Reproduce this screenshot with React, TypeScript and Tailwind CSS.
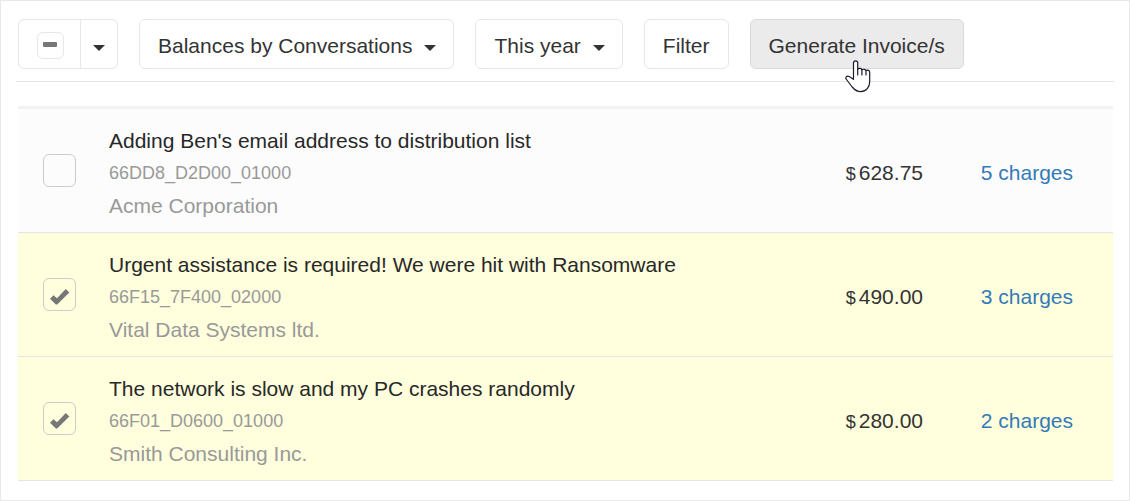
import { useEffect, useRef, useState } from "react";

type Conversation = {
  code: string;
  subject: string;
  company: string;
  amount: string;
  charges: number;
};

const conversations: Conversation[] = [
  {
    code: "66DD8_D2D00_01000",
    subject: "Adding Ben's email address to distribution list",
    company: "Acme Corporation",
    amount: "628.75",
    charges: 5,
  },
  {
    code: "66F15_7F400_02000",
    subject: "Urgent assistance is required! We were hit with Ransomware",
    company: "Vital Data Systems ltd.",
    amount: "490.00",
    charges: 3,
  },
  {
    code: "66F01_D0600_01000",
    subject: "The network is slow and my PC crashes randomly",
    company: "Smith Consulting Inc.",
    amount: "280.00",
    charges: 2,
  },
];

const Caret = ({ className = "" }: { className?: string }) => (
  <svg
    viewBox="0 0 12 6"
    className={`w-3 h-[6px] fill-[#333] pointer-events-none ${className}`}
    aria-hidden="true"
  >
    <path d="M0 0h12L6 6z" />
  </svg>
);

const HandCursor = () => (
  <svg
    viewBox="0 0 26 33"
    className="absolute left-[94px] top-[40px] w-[26px] h-[33px] pointer-events-none"
    fill="#fff"
    stroke="#1b1b2b"
    strokeWidth="1.2"
    strokeLinecap="round"
    strokeLinejoin="round"
    aria-hidden="true"
  >
    <path d="M8.5 19.3V2.9a2.1 2.1 0 0 1 4.2 0v6.2c1.500-1.300 3.800-.8 4.200.7 1.500-1 3.500-.5 4.100.7 1.700-.8 3.700-.2 3.700 1.900v9.300c0 5.300-3.500 10-9 10-4.200 0-6.200-2-8.500-4.700L1.500 19.500C-.2 17.300 1.800 15.600 4 16.500c1.800.7 3 1.800 4.500 2.800z" />
    <path d="M12.700 9v6M16.900 9.800v5.200M21 10.500V15" fill="none" />
  </svg>
);

type SelectProps = { label: string; options: string[] };

const ToolbarSelect = ({ label, options }: SelectProps) => (
  <div className="relative flex items-center">
    <select
      aria-label={label}
      className="field-sizing-content appearance-none h-[50px] pt-1 pl-[18px] pr-[41px] border border-[#e7e7e7] rounded-md bg-white text-[#333]"
    >
      {options.map((option) => (
        <option key={option}>{option}</option>
      ))}
    </select>
    <Caret className="absolute right-[18px] top-[26px]" />
  </div>
);

const App = () => {
  const [selected, setSelected] = useState<string[]>([
    "66F15_7F400_02000",
    "66F01_D0600_01000",
  ]);
  const allRef = useRef<HTMLInputElement>(null);

  const allSelected = selected.length === conversations.length;
  const someSelected = selected.length > 0 && !allSelected;

  useEffect(() => {
    if (allRef.current) allRef.current.indeterminate = someSelected;
  }, [someSelected]);

  const toggle = (code: string) =>
    setSelected((prev) =>
      prev.includes(code) ? prev.filter((c) => c !== code) : [...prev, code]
    );

  const toggleAll = () =>
    setSelected(allSelected ? [] : conversations.map((c) => c.code));

  return (
    <div className="border border-[#e8e8e8] bg-white px-[15px] pt-[18px] pb-[19px] font-['Liberation_Sans',Arial,sans-serif] text-[21px] text-[#333]">
      <div className="flex flex-wrap items-center gap-[21px] px-[2px] pb-3 border-b border-[#e5e5e5]">
        <div className="flex h-[50px] border border-[#e7e7e7] rounded-md bg-white">
          <label className="relative flex items-center pl-[18px] pr-4 pt-[2px] border-r border-[#e7e7e7]">
            <input
              ref={allRef}
              type="checkbox"
              aria-label="Select all"
              checked={allSelected}
              onChange={toggleAll}
              className="peer appearance-none size-[27px] border border-[#e7e7e7] rounded-md"
            />
            <span className="absolute left-6 top-[22px] hidden peer-indeterminate:block w-[14px] h-[5px] rounded-[1px] bg-[#777]" />
          </label>
          <button
            type="button"
            aria-label="Selection options"
            className="px-3 pt-2"
          >
            <Caret />
          </button>
        </div>
        <ToolbarSelect
          label="View"
          options={["Balances by Conversations", "Balances by Customers"]}
        />
        <ToolbarSelect label="Period" options={["This year", "Last year"]} />
        <button
          type="button"
          className="h-[50px] px-[18px] pt-1 border border-[#e7e7e7] rounded-md bg-white"
        >
          Filter
        </button>
        <button
          type="button"
          className="relative h-[50px] px-[18px] pt-1 border border-[#d9d9d9] rounded-md bg-[#ebebeb]"
        >
          Generate Invoice/s
          <HandCursor />
        </button>
      </div>

      <div className="pl-[2px] pr-px mt-6">
        <table className="w-full border-separate border-spacing-0 border-t-3 border-[#f3f3f3]">
          <tbody>
            {conversations.map((item) => {
              const checked = selected.includes(item.code);
              return (
                <tr
                  key={item.code}
                  className={checked ? "bg-[#ffffdd]" : "bg-[#fcfcfc]"}
                >
                  <td className="w-[91px] pl-[25px] border-b border-[#e5e5e5]">
                    <label className="relative block size-[33px]">
                      <input
                        type="checkbox"
                        aria-label={item.subject}
                        checked={checked}
                        onChange={() => toggle(item.code)}
                        className="peer block appearance-none size-[33px] border border-[#ccc] rounded-md"
                      />
                      <svg
                        viewBox="0 0 33 33"
                        className="absolute inset-0 hidden peer-checked:block fill-[#777] pointer-events-none"
                        aria-hidden="true"
                      >
                        <path d="M7 20.800L10.500 17.300L14 20.200L22.800 11L26.300 14.500L14.200 26.400L12.800 26.400z" />
                      </svg>
                    </label>
                  </td>
                  <td className="pt-4 pb-[9px] border-b border-[#e5e5e5]">
                    <div className="leading-8 text-[#282828]">{item.subject}</div>
                    <div className="leading-8 text-[18px] text-[#999]">
                      {item.code}
                    </div>
                    <div className="leading-[34px] text-[#999]">
                      {item.company}
                    </div>
                  </td>
                  <td className="w-[120px] pt-1 text-right border-b border-[#e5e5e5]">
                    <span className="mr-[3px] text-[18px]">$</span>
                    {item.amount}
                  </td>
                  <td className="w-[190px] pt-1 pr-10 text-right border-b border-[#e5e5e5]">
                    <a href="#charges" className="text-[#337ab7]">
                      {item.charges} charges
                    </a>
                  </td>
                </tr>
              );
            })}
          </tbody>
        </table>
      </div>
    </div>
  );
};

export default App;
